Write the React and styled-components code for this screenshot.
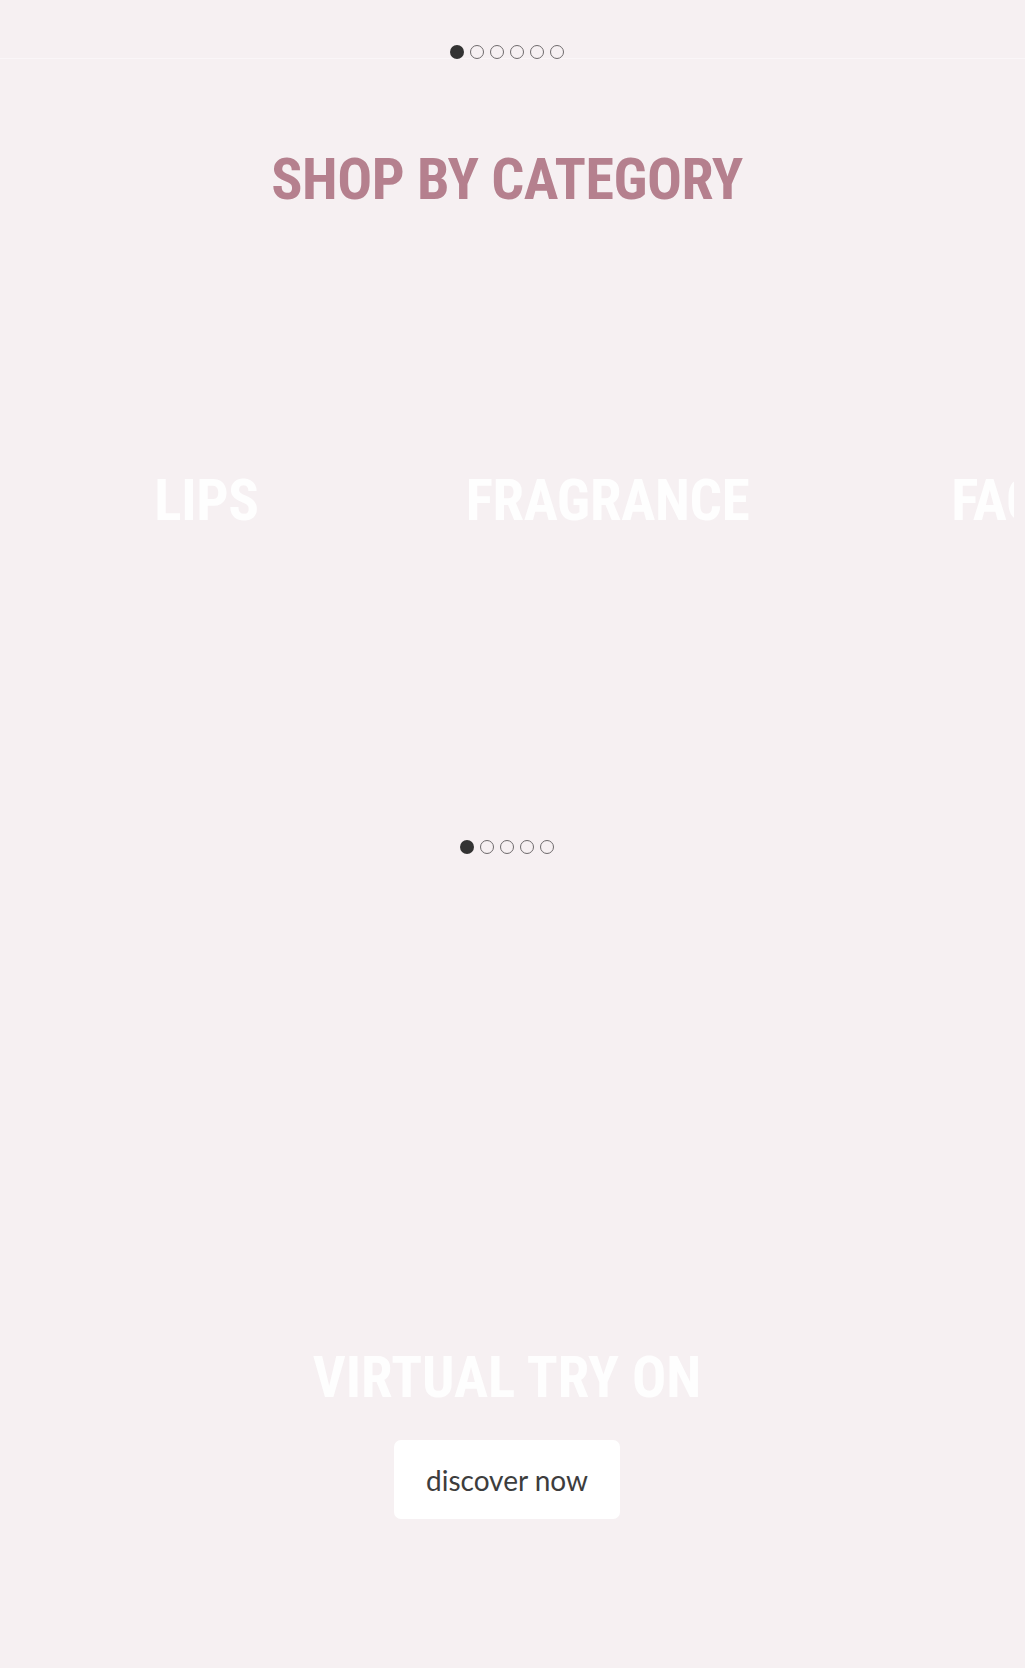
import React from "react";
import styled, { createGlobalStyle } from "styled-components";

const GlobalStyle = createGlobalStyle`
  * { box-sizing: border-box; }
  html, body { margin: 0; padding: 0; background: #f6f0f2; }
  body { font-family: "Liberation Sans", Arial, sans-serif; }
`;

const condensed = `"Liberation Sans Narrow", "Arial Narrow", "Roboto Condensed", "DejaVu Sans Condensed", sans-serif`;

const Page = styled.div`
  min-height: 1668px;
  background: #f6f0f2;
  display: flex;
  flex-direction: column;
`;

const TopPager = styled.div`
  height: 59px;
  padding-top: 45px;
  padding-right: 11px;
  border-bottom: 1px solid #faf6f8;
  display: flex;
  justify-content: center;
`;

const Dots = styled.div`
  display: flex;
  gap: 6px;
  height: 14px;
  margin-top: ${(p) => p.$top || 0}px;
  justify-content: center;
`;

const Dot = styled.span`
  width: 14px;
  height: 14px;
  border-radius: 50%;
  background: ${(p) => (p.$active ? "#333333" : "transparent")};
  border: ${(p) => (p.$active ? "none" : "1.5px solid #6e6a6c")};
`;

const Content = styled.main`
  width: calc(100% - 11px);
  display: flex;
  flex-direction: column;
  align-items: center;
`;

const SectionTitle = styled.h2`
  margin: 91px 0 0;
  font-family: ${condensed};
  font-stretch: condensed;
  font-weight: 700;
  font-size: 58px;
  line-height: 58px;
  color: #b5808e;
  letter-spacing: -0.5px;
  text-align: center;
`;

const CarouselViewport = styled.div`
  width: 100%;
  margin-top: 32px;
  overflow: hidden;
`;

const Track = styled.div`
  display: flex;
  padding-left: 6px;
`;

const Slide = styled.a`
  flex: 0 0 401px;
  height: 520px;
  display: flex;
  align-items: center;
  justify-content: center;
  text-decoration: none;
`;

const SlideLabel = styled.span`
  font-family: ${condensed};
  font-stretch: condensed;
  font-weight: 700;
  font-size: 57px;
  line-height: 57px;
  color: #fefefe;
  letter-spacing: -0.3px;
  white-space: nowrap;
`;

const TryOn = styled.section`
  width: 100%;
  padding-top: 495px;
  padding-bottom: 149px;
  display: flex;
  flex-direction: column;
  align-items: center;
`;

const TryOnTitle = styled.h2`
  margin: 0;
  font-family: ${condensed};
  font-stretch: condensed;
  font-weight: 700;
  font-size: 57px;
  line-height: 57px;
  color: #fefefe;
  letter-spacing: 0;
`;

const DiscoverButton = styled.button`
  margin-top: 34px;
  width: 226px;
  height: 79px;
  border: none;
  border-radius: 7px;
  background: #ffffff;
  font-family: Lato, "Open Sans", sans-serif;
  font-weight: 400;
  font-size: 28px;
  color: #3d3d3d;
  cursor: pointer;
`;

const categories = ["LIPS", "FRAGRANCE", "FACE"];

function Pager({ count, top }) {
  return (
    <Dots $top={top}>
      {Array.from({ length: count }).map((_, i) => (
        <Dot key={i} $active={i === 0} />
      ))}
    </Dots>
  );
}

export default function App() {
  return (
    <>
      <GlobalStyle />
      <Page>
        <TopPager>
          <Pager count={6} />
        </TopPager>
        <Content>
          <SectionTitle>SHOP BY CATEGORY</SectionTitle>
          <CarouselViewport>
            <Track>
              {categories.map((c) => (
                <Slide key={c} href="#">
                  <SlideLabel>{c}</SlideLabel>
                </Slide>
              ))}
            </Track>
          </CarouselViewport>
          <Pager count={5} top={80} />
          <TryOn>
            <TryOnTitle>VIRTUAL TRY ON</TryOnTitle>
            <DiscoverButton>discover now</DiscoverButton>
          </TryOn>
        </Content>
      </Page>
    </>
  );
}
